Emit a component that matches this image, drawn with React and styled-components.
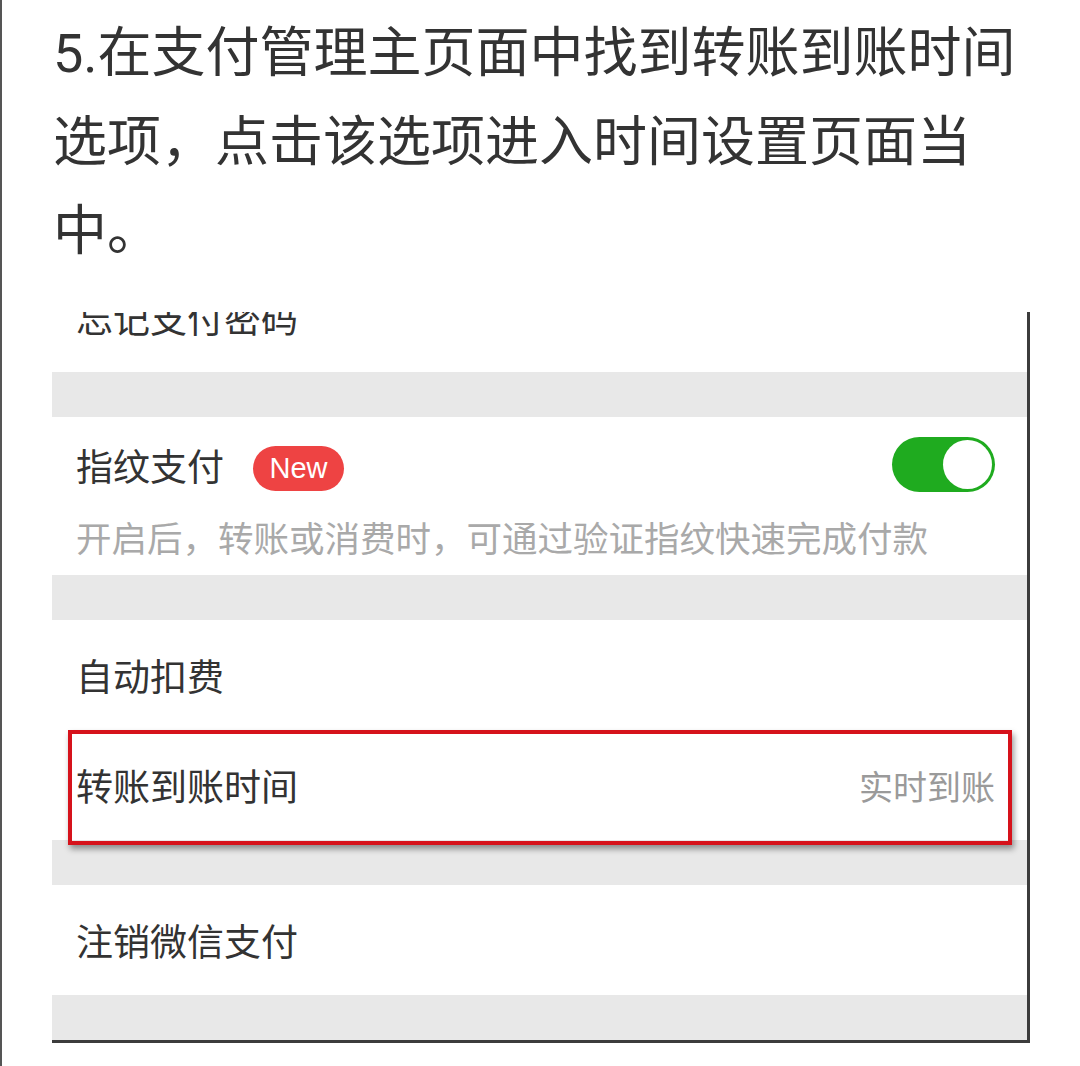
import React from "react";
import styled, { createGlobalStyle } from "styled-components";

const GlobalStyle = createGlobalStyle`
  html, body { margin: 0; padding: 0; background: #ffffff; }
  * { box-sizing: border-box; }
`;

const Page = styled.div`
  min-height: 1066px;
  border-left: 2px solid #555555;
  padding: 9px 0 0 50px;
  font-family: Roboto, "Noto Sans CJK SC", sans-serif;
`;

const Title = styled.p`
  margin: 0 0 0 1px;
  width: 968px;
  font-size: 54px;
  line-height: 89px;
  color: #333333;
  font-weight: 400;
`;

const Shot = styled.div`
  position: relative;
  margin-top: 36px;
  width: 978px;
  overflow: hidden;
  background: #ffffff;
  border-right: 3px solid #3c3c3c;
  border-bottom: 3px solid #3c3c3c;
  font-family: "Noto Sans CJK SC", sans-serif;
`;

const Row = styled.div`
  display: flex;
  align-items: center;
  justify-content: space-between;
  height: 110px;
  margin-top: ${(p) => (p.$clipTop ? `-${p.$clipTop}px` : "0")};
  padding: 0 32px 0 24px;
  font-size: 37px;
  color: #333333;
`;

const TallRow = styled.div`
  display: flex;
  flex-direction: column;
  height: 158px;
  padding: 20px 32px 13px 24px;
`;

const TitleLine = styled.div`
  display: flex;
  align-items: center;
  height: 55px;
  font-size: 37px;
  color: #333333;
`;

const Badge = styled.span`
  display: inline-flex;
  align-items: center;
  justify-content: center;
  margin: 8px 0 0 29px;
  width: 91px;
  height: 45px;
  border-radius: 23px;
  background: #ee4343;
  color: #ffffff;
  font-family: "Liberation Sans", Arial, sans-serif;
  font-size: 29px;
`;

const Spacer = styled.div`
  flex: 1;
`;

const Toggle = styled.div`
  display: flex;
  justify-content: flex-end;
  align-items: center;
  width: 103px;
  height: 55px;
  border-radius: 28px;
  background: #1fab1f;
  padding: 3px;
`;

const Knob = styled.div`
  width: 49px;
  height: 49px;
  border-radius: 50%;
  background: #ffffff;
`;

const Subtitle = styled.div`
  margin-top: 23px;
  font-size: 35.5px;
  line-height: 44px;
  color: #a9a9a9;
  white-space: nowrap;
`;

const Value = styled.span`
  font-size: 34px;
  color: #9a9a9a;
`;

const Band = styled.div`
  height: 45px;
  background: #e8e8e8;
`;

const Highlight = styled.div`
  position: absolute;
  left: 16px;
  top: 418px;
  width: 944px;
  height: 115px;
  border: 4px solid #d6121b;
  box-shadow: 2px 4px 6px rgba(0, 0, 0, 0.4);
  pointer-events: none;
`;

export default function App() {
  return (
    <>
      <GlobalStyle />
      <Page>
        <Title>
          5.在支付管理主页面中找到转账到账时间选项，点击该选项进入时间设置页面当中。
        </Title>
        <Shot>
          <Row $clipTop={50}>忘记支付密码</Row>
          <Band />
          <TallRow>
            <TitleLine>
              指纹支付
              <Badge>New</Badge>
              <Spacer />
              <Toggle>
                <Knob />
              </Toggle>
            </TitleLine>
            <Subtitle>开启后，转账或消费时，可通过验证指纹快速完成付款</Subtitle>
          </TallRow>
          <Band />
          <Row>自动扣费</Row>
          <Row>
            转账到账时间
            <Value>实时到账</Value>
          </Row>
          <Band />
          <Row>注销微信支付</Row>
          <Band />
          <Highlight />
        </Shot>
      </Page>
    </>
  );
}
